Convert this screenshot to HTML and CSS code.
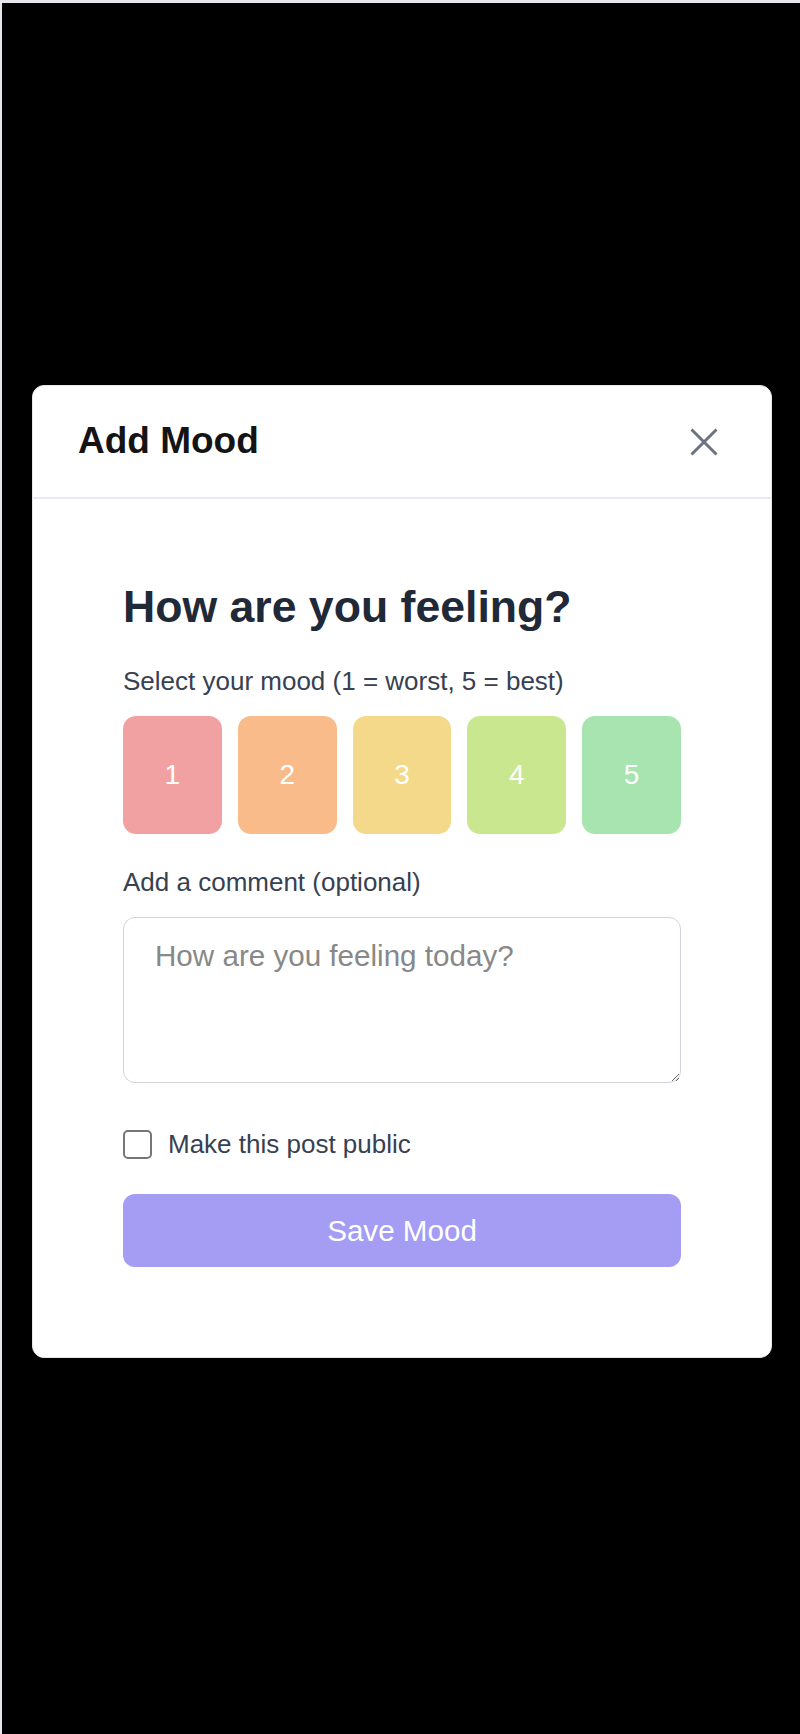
FILE: index.html
```html
<!DOCTYPE html>
<html lang="en">
  <head>
    <meta charset="UTF-8" />
    <meta name="viewport" content="width=device-width, initial-scale=1.0" />
    <title>Add Mood</title>
    <link rel="stylesheet" href="styles.css">
  </head>
  <body>
    <div class="overlay">
      <div class="modal">
        <div class="modal-header">
          <h1>Add Mood</h1>
          <button class="close-btn" aria-label="Close">
            <svg width="28" height="28" viewBox="0 0 28 28">
              <path d="M1.5 1.5L26.5 26.5M26.5 1.5L1.5 26.5" stroke="currentColor" stroke-width="3" fill="none" />
            </svg>
          </button>
        </div>

        <form class="modal-body">
          <h2>How are you feeling?</h2>

          <p class="field-label">Select your mood (1 = worst, 5 = best)</p>
          <div class="mood-scale">
            <button type="button" class="mood mood-1">1</button>
            <button type="button" class="mood mood-2">2</button>
            <button type="button" class="mood mood-3">3</button>
            <button type="button" class="mood mood-4">4</button>
            <button type="button" class="mood mood-5">5</button>
          </div>

          <label class="field-label comment-label" for="comment">Add a comment (optional)</label>
          <textarea id="comment" placeholder="How are you feeling today?"></textarea>

          <label class="public-toggle">
            <input type="checkbox" />
            <span>Make this post public</span>
          </label>

          <button type="submit" class="save-btn">Save Mood</button>
        </form>
      </div>
    </div>
  </body>
</html>
```

FILE: styles.css
```css
html,
body {
  margin: 0;
  padding: 0;
  font-family: "Liberation Sans", Arial, sans-serif;
  background-color: #e6e7ed;
  overflow: hidden;
}
body {
  padding: 3px 0 0 2px;
}
.overlay {
  width: 800px;
  min-height: 1731px;
  background-color: #000;
  box-sizing: border-box;
  padding: 382px 30px 0;
}
.modal {
  background-color: #fff;
  border: 1px solid #e5e7eb;
  border-radius: 12px;
}
.modal-header {
  display: flex;
  justify-content: space-between;
  align-items: center;
  height: 111px;
  padding: 0 53px 0 45px;
  border-bottom: 2px solid #e8e8ee;
}
.modal-header h1 {
  margin: 0;
  font-size: 37px;
  line-height: 1.2;
  font-weight: bold;
  color: #141414;
}
.close-btn {
  display: flex;
  padding: 0;
  background: none;
  border: none;
  color: #6b7280;
  cursor: pointer;
}
.modal-body {
  display: flex;
  flex-direction: column;
  padding: 82px 90px 90px;
}
.modal-body h2 {
  margin: 0;
  font-size: 44.6px;
  line-height: 52px;
  font-weight: bold;
  color: #1f2937;
}
.field-label {
  margin: 29px 0 0;
  font-size: 26px;
  line-height: 39px;
  color: #374151;
}
.mood-scale {
  display: flex;
  gap: 16px;
  margin-top: 15px;
}
.mood {
  flex: 1;
  height: 118px;
  border: none;
  border-radius: 13px;
  font-family: inherit;
  font-size: 28px;
  color: #fff;
  cursor: pointer;
}
.mood-1 {
  background-color: #f2a1a2;
}
.mood-2 {
  background-color: #f8bb89;
}
.mood-3 {
  background-color: #f4d98b;
}
.mood-4 {
  background-color: #c9e78f;
}
.mood-5 {
  background-color: #a7e4b0;
}
textarea {
  margin-top: 15px;
  height: 166px;
  box-sizing: border-box;
  padding: 15px 29px 15px 31px;
  border: 1px solid #d1d5db;
  border-radius: 12px;
  font-family: inherit;
  font-size: 29.6px;
  line-height: 45px;
  color: #374151;
}
textarea::placeholder {
  color: #888;
}
.public-toggle {
  display: flex;
  align-items: center;
  gap: 16px;
  margin-top: 42px;
  font-size: 26px;
  line-height: 39px;
  color: #374151;
}
.public-toggle input {
  appearance: none;
  margin: 0;
  width: 29px;
  height: 29px;
  border: 2px solid #767676;
  border-radius: 5px;
  background-color: #fff;
}
.save-btn {
  margin-top: 30px;
  height: 73px;
  border: none;
  border-radius: 12px;
  background-color: #a59cf3;
  color: #fff;
  font-family: inherit;
  font-size: 29.6px;
  cursor: pointer;
}
```
